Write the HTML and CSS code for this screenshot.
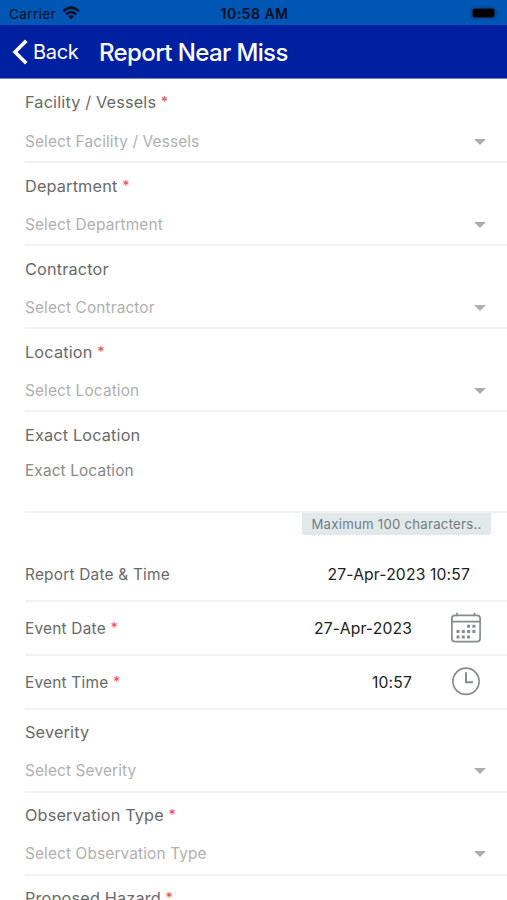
FILE: index.html
```html
<!DOCTYPE html>
<html lang="en">
<head>
<meta charset="utf-8">
<title>Report Near Miss</title>
<link rel="stylesheet" href="styles.css">
</head>
<body>
<div class="status">
  <div class="network"><span>Carrier</span>
  <svg class="wifi" width="18" height="14" viewBox="0 0 18 14"><g fill="none" stroke="#03101f" stroke-width="2.5"><path d="M1.2 5.1Q9-1.8 16.8 5.1"/><path d="M4 8.2Q9 3.8 14 8.2"/></g><path d="M6.1 10.3Q9 7.9 11.9 10.3L9 13.2Z" fill="#03101f"/></svg></div>
  <span class="clock">10:58 AM</span>
  <svg class="battery" width="30" height="14" viewBox="0 0 30 14"><rect x="1" y="1" width="25" height="12" rx="3.5" fill="none" stroke="#064385" stroke-width="1.2"/><rect x="2.5" y="2.5" width="22" height="9" rx="2" fill="#000"/><path d="M27.5 5v4q1.5-.5 1.5-2t-1.5-2" fill="#064385"/></svg>
</div>
<header class="nav">
  <svg class="chevron" width="17" height="26" viewBox="0 0 17 26"><path d="M14.3 1.8 3 13l11.3 11.2" fill="none" stroke="#fff" stroke-width="3.6"/></svg>
  <span class="back">Back</span>
  <h1 class="title">Report Near Miss</h1>
</header>
<main class="form">
  <section class="field"><div class="label">Facility / Vessels <b>*</b></div><div class="select"><span>Select Facility / Vessels</span><i class="caret"></i></div></section>
  <section class="field"><div class="label">Department <b>*</b></div><div class="select"><span>Select Department</span><i class="caret"></i></div></section>
  <section class="field"><div class="label">Contractor</div><div class="select"><span>Select Contractor</span><i class="caret"></i></div></section>
  <section class="field"><div class="label">Location <b>*</b></div><div class="select"><span>Select Location</span><i class="caret"></i></div></section>
  <section class="field area"><div class="label">Exact Location</div><div class="input">Exact Location</div></section>
  <div class="hint-row"><span class="hint">Maximum 100 characters..</span></div>
  <section class="row report"><span class="name">Report Date &amp; Time</span><span class="value">27-Apr-2023 10:57</span></section>
  <section class="row"><span class="name">Event Date <b>*</b></span><span class="value">27-Apr-2023</span>
    <svg class="icon" width="32" height="32" viewBox="0 0 32 32"><g fill="none" stroke="#858b8e" stroke-width="1.7"><rect x="1.9" y="3.4" width="28.2" height="26.2" rx="3.2"/><path d="M2 9.7h28M7 .8v3.5M24.5 .8v3.5"/></g><g fill="none" stroke="#858b8e" stroke-width="3" stroke-dasharray="3 2.3"><path d="M17.1 14.3h8.3M6.5 19.6h19M6.5 24.9h13.6"/></g></svg>
  </section>
  <section class="row"><span class="name">Event Time <b>*</b></span><span class="value">10:57</span>
    <svg class="icon" width="32" height="32" viewBox="0 0 32 32"><g fill="none" stroke="#858b8e"><circle cx="16" cy="15.3" r="13.1" stroke-width="1.7"/><path d="M16 6.3v10h7" stroke-width="2"/></g></svg>
  </section>
  <section class="field lower"><div class="label">Severity</div><div class="select"><span>Select Severity</span><i class="caret"></i></div></section>
  <section class="field lower"><div class="label">Observation Type <b>*</b></div><div class="select"><span>Select Observation Type</span><i class="caret"></i></div></section>
  <section class="field lower"><div class="label">Proposed Hazard <b>*</b></div></section>
</main>
</body>
</html>
```
FILE: styles.css
```css
* { box-sizing: border-box; }
body {
  margin: 0;
  height: 900px;
  overflow: hidden;
  background: #fff;
  color: #68696b;
  font-family: Inter, "Liberation Sans", sans-serif;
}
.status {
  display: grid;
  grid-template-columns: 1fr auto 1fr;
  align-items: center;
  height: 25px;
  padding: 2px 7px 0 9px;
  background: #0056b4;
  color: #03101f;
  font-size: 13.5px;
  line-height: 22px;
}
.network {
  display: flex;
  align-items: center;
  gap: 6px;
  letter-spacing: .4px;
}
.wifi { margin-top: -2px; }
.clock { font-weight: 600; font-size: 14px; letter-spacing: .5px; }
.battery { justify-self: end; margin-top: -1px; }
.nav {
  display: flex;
  align-items: center;
  height: 54px;
  padding-left: 12px;
  background: #0020a2;
  border-bottom: 1px solid #6f82cc;
  color: #fff;
}
.back {
  width: 66px;
  margin-left: 4px;
  padding-top: 1px;
  font-size: 20px;
  letter-spacing: -.3px;
}
.title {
  margin: 0;
  padding-top: 2px;
  font-size: 24px;
  font-weight: 450;
  letter-spacing: -.61px;
  white-space: nowrap;
}
.form { padding-left: 25px; }
.field {
  height: 83px;
  padding-top: 11px;
  border-bottom: 2px solid #f2f2f2;
}
.field:first-child { height: 84px; padding-top: 11px; }
.field:first-child .select { margin-top: 15px; }
.label {
  height: 24px;
  font-size: 16.3px;
  line-height: 24px;
  letter-spacing: .15px;
  white-space: nowrap;
}
b {
  color: #f5525a;
  font-size: 14px;
  font-weight: 500;
  line-height: 1;
  vertical-align: 1px;
}
.select {
  display: flex;
  align-items: center;
  justify-content: space-between;
  height: 24px;
  margin-top: 14px;
  padding-right: 21px;
  color: #b0b0b0;
  font-size: 15.4px;
  letter-spacing: .13px;
}
.caret {
  margin-top: 1px;
  border: 6px solid transparent;
  border-top-color: #adadad;
  border-bottom: 0;
}
.area { height: 101px; }
.input {
  margin-top: 12px;
  color: #88898a;
  font-size: 15.4px;
  letter-spacing: .12px;
  line-height: 24px;
}
.hint-row {
  display: flex;
  justify-content: flex-end;
  height: 34px;
  padding-right: 16px;
}
.hint {
  width: 189px;
  height: 22px;
  border-radius: 0 0 3px 3px;
  background: #e2e9eb;
  color: #737b7e;
  font-size: 13.2px;
  letter-spacing: .25px;
  line-height: 22px;
  text-align: center;
}
.row {
  display: flex;
  align-items: center;
  height: 54px;
  padding-right: 25px;
  border-bottom: 2px solid #f2f2f2;
  font-size: 15.4px;
  letter-spacing: .22px;
}
.report { height: 55px; padding-top: 2px; padding-right: 37px; }
.value { margin-left: auto; color: #202124; font-size: 15.7px; letter-spacing: .15px; }
.icon { margin-left: 38px; }
.lower { padding-top: 10px; }
```
